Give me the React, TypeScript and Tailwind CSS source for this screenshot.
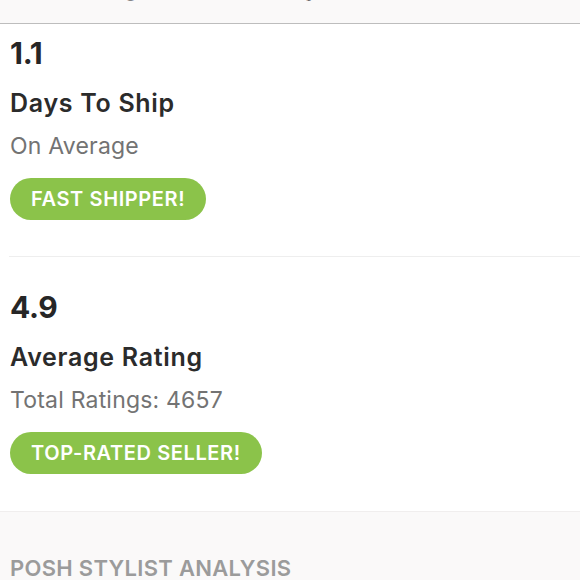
import React from 'react'

const stats = [
  { value: '1.1', title: 'Days To Ship', sub: 'On Average', badge: 'FAST SHIPPER!' },
  { value: '4.9', title: 'Average Rating', sub: 'Total Ratings: 4657', badge: 'TOP-RATED SELLER!' },
]

const App = () => {
  return (
    <div className="w-[580px] h-[580px] overflow-hidden bg-white font-['Inter',sans-serif] text-[#2b2b2b]">
      {/* Header strip, cut off at the top */}
      <div className="h-[24px] overflow-hidden bg-[#faf9f9] border-b border-[#bdbdbd]">
        <p className="mt-[-29px] px-[10px] text-[26px] font-semibold leading-[30px] text-[#2b2b2b]">Upcoming Seller Activity</p>
      </div>

      <div className="pl-[9px]">
        {stats.map((s, i) => (
          <div
            key={s.value}
            className={`pl-[1px] ${i === 0 ? 'pt-[11px] pb-[36px] border-b border-[#eeeeee]' : 'pt-[32px] pb-[37px]'}`}
          >
            <p className="text-[30px] font-bold leading-[36px] tracking-[-0.3px] text-[#262626]">{s.value}</p>
            <p className="mt-[16px] text-[25px] font-semibold leading-[32px] tracking-[0.7px] text-[#2b2b2b]">{s.title}</p>
            <p className="mt-[12px] text-[23px] leading-[30px] tracking-[0.2px] text-[#737373]">{s.sub}</p>
            <span className="mt-[17px] inline-flex h-[42px] items-center rounded-full bg-[#8bc34a] px-[21px] text-[20px] font-semibold tracking-[0.6px] text-white">
              {s.badge}
            </span>
          </div>
        ))}
      </div>

      <div className="border-t border-[#f0eeee] bg-[#faf9f9] px-[10px] pt-[41px] h-[80px]">
        <p className="text-[22px] font-semibold tracking-[0.3px] leading-[30px] text-[#9b9b9b]">POSH STYLIST ANALYSIS</p>
      </div>
    </div>
  )
}

export default App
